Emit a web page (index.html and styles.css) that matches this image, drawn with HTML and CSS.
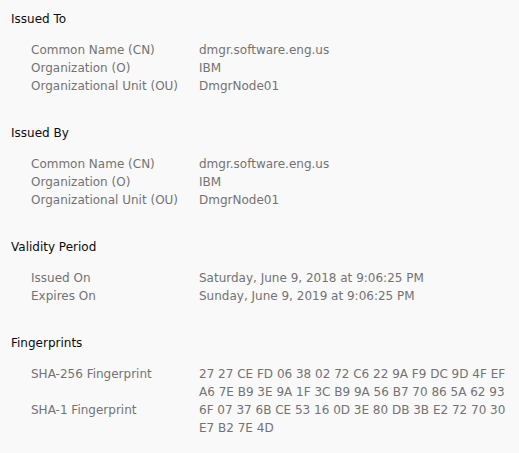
FILE: index.html
```html
<!DOCTYPE html>
<html>
<head>
<meta charset="utf-8">
<link rel="stylesheet" href="styles.css">
</head>
<body>
<div class="page">
  <section class="group">
    <h2 class="title">Issued To</h2>
    <div class="rows">
      <div class="label">Common Name (CN)</div><div class="value">dmgr.software.eng.us</div>
      <div class="label">Organization (O)</div><div class="value">IBM</div>
      <div class="label">Organizational Unit (OU)</div><div class="value">DmgrNode01</div>
    </div>
  </section>
  <section class="group">
    <h2 class="title">Issued By</h2>
    <div class="rows">
      <div class="label">Common Name (CN)</div><div class="value">dmgr.software.eng.us</div>
      <div class="label">Organization (O)</div><div class="value">IBM</div>
      <div class="label">Organizational Unit (OU)</div><div class="value">DmgrNode01</div>
    </div>
  </section>
  <section class="group">
    <h2 class="title">Validity Period</h2>
    <div class="rows">
      <div class="label">Issued On</div><div class="value">Saturday, June 9, 2018 at 9:06:25 PM</div>
      <div class="label">Expires On</div><div class="value">Sunday, June 9, 2019 at 9:06:25 PM</div>
    </div>
  </section>
  <section class="group">
    <h2 class="title">Fingerprints</h2>
    <div class="rows">
      <div class="label">SHA-256 Fingerprint</div><div class="value">27 27 CE FD 06 38 02 72 C6 22 9A F9 DC 9D 4F EF A6 7E B9 3E 9A 1F 3C B9 9A 56 B7 70 86 5A 62 93</div>
      <div class="label">SHA-1 Fingerprint</div><div class="value">6F 07 37 6B CE 53 16 0D 3E 80 DB 3B E2 72 70 30 E7 B2 7E 4D</div>
    </div>
  </section>
</div>
</body>
</html>
```

FILE: styles.css
```css
html, body {
  margin: 0;
  padding: 0;
  background: #f9f9f9;
}
body {
  font-family: "DejaVu Sans", sans-serif;
  font-size: 12px;
  line-height: 18px;
}
.page {
  padding: 10px 10px 0 11px;
}
.group {
  margin-bottom: 29px;
}
.title {
  margin: 0 0 13px 0;
  font-size: 12px;
  font-weight: normal;
  line-height: 18px;
  color: #0c0c0c;
}
.rows {
  display: grid;
  grid-template-columns: 168px 1fr;
  padding-left: 20px;
  color: #737373;
}
```
